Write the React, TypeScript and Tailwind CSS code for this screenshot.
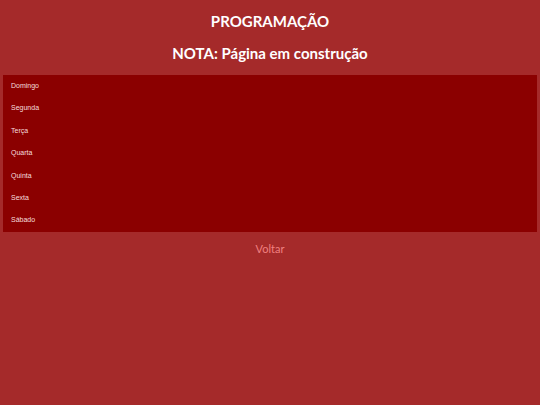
const days = ['Domingo', 'Segunda', 'Terça', 'Quarta', 'Quinta', 'Sexta', 'Sábado'];

export default function App() {
  return (
    <div className="min-h-screen bg-[#a52a2a] font-['Lato',sans-serif] text-white">
      <h1 className="pt-[11px] text-center text-[15px] font-bold leading-[20px]">PROGRAMAÇÃO</h1>
      <h2 className="mt-[12px] text-center text-[15px] font-bold leading-[20px]">NOTA: Página em construção</h2>

      <ul className="mx-[3px] mt-[12px] bg-[#8b0000] font-['Liberation_Sans',Arial,sans-serif] text-[7px] text-[#f5dede]">
        {days.map((day) => (
          <li key={day} className="flex h-[22.4px] items-center pl-[8px]">
            {day}
          </li>
        ))}
      </ul>

      <div className="mt-[7px] text-center leading-[16px]">
        <a href="#" className="text-[11px] text-[#f08080]">Voltar</a>
      </div>
    </div>
  );
}
